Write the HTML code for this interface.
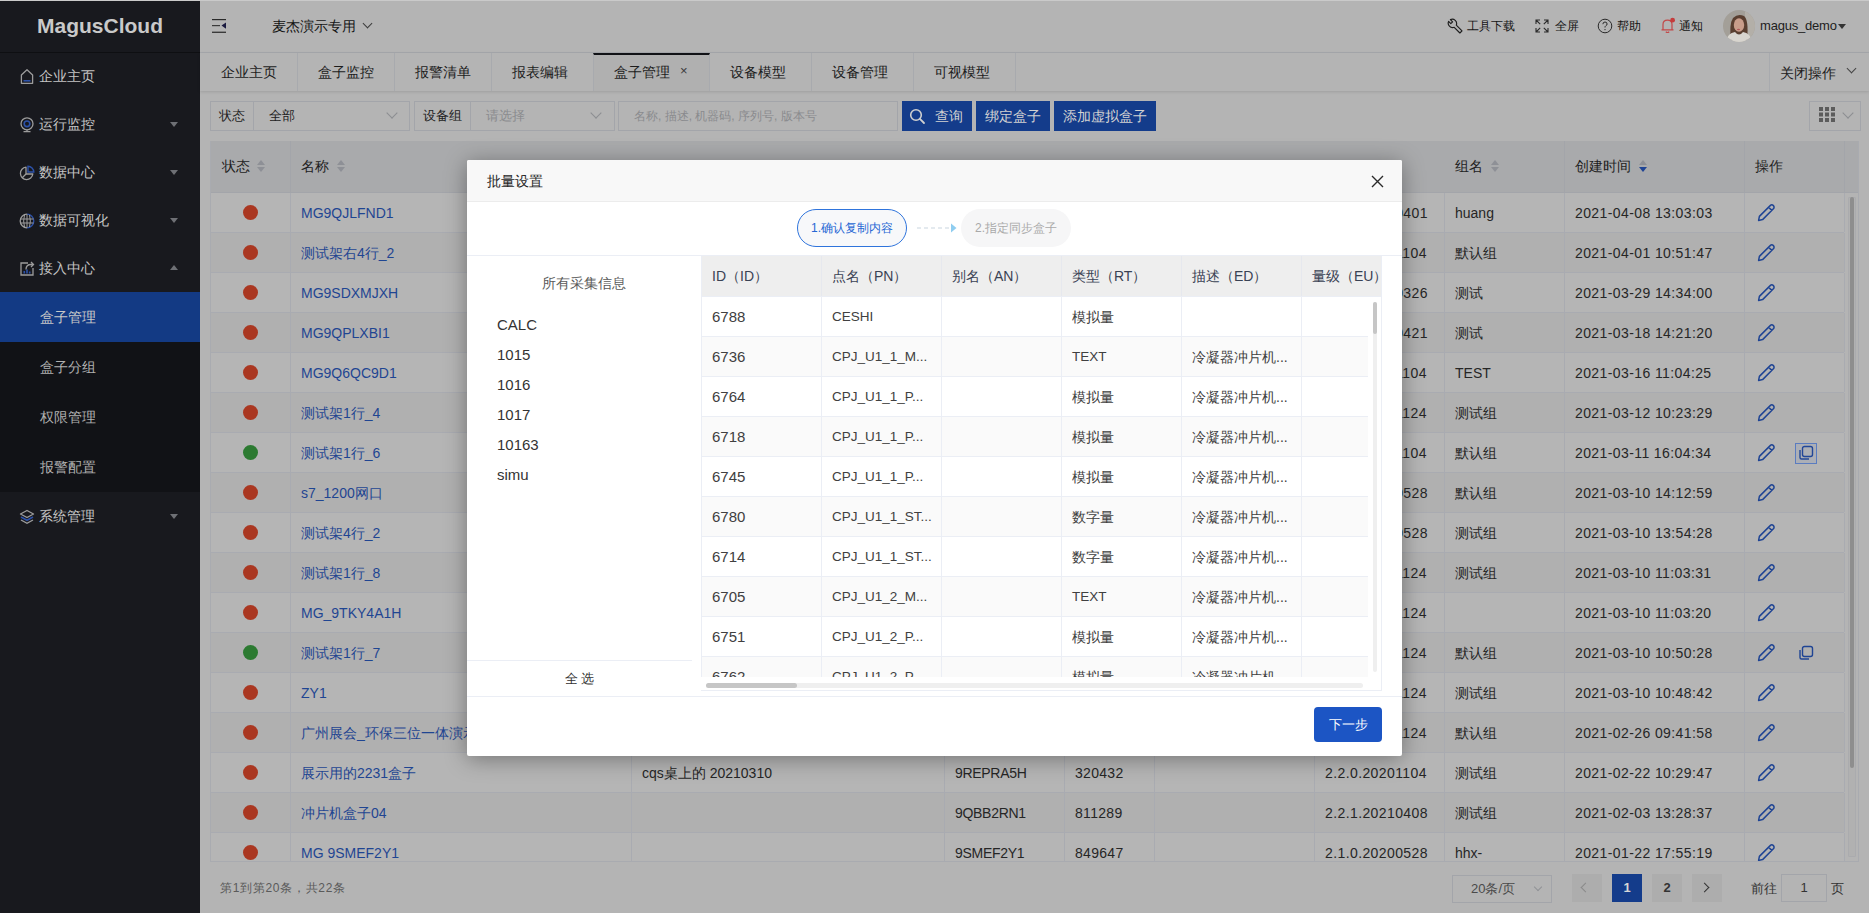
<!DOCTYPE html><html><head><meta charset="utf-8"><style>
*{box-sizing:border-box;margin:0;padding:0}
html,body{width:1869px;height:913px;overflow:hidden;background:#b4b4b4;font-family:"Liberation Sans",sans-serif;font-size:14px;color:#1e1e1e}
.a{position:absolute;white-space:nowrap}
#side{position:absolute;left:0;top:0;width:200px;height:913px;background:#18191e}
#logo{position:absolute;left:0;top:0;width:200px;height:53px;border-bottom:1px solid #0e0f12;color:#c9c9c9;font-weight:bold;font-size:21px;text-align:center;line-height:52px}
.mi{position:absolute;left:0;width:200px;height:48px;line-height:48px;color:#c4c4c4;font-size:14px}
.mi .t{position:absolute;left:39px;top:0}
.mi svg{position:absolute;left:19px;top:17px}
.car{position:absolute;left:170px;top:22px;width:0;height:0;border-left:4px solid transparent;border-right:4px solid transparent;border-top:5px solid #6e7075}
.car.up{border-top:0;border-bottom:5px solid #6e7075;top:21px}
#sub{position:absolute;left:0;top:292px;width:200px;height:200px;background:#111216}
.si{position:absolute;left:0;width:200px;height:50px;line-height:50px;color:#b0b0b0}
.si .t{position:absolute;left:40px}
.si.on{background:#133a84;color:#c8c8c8}
#hdr{position:absolute;left:200px;top:0;width:1669px;height:53px;background:#b4b4b4;border-bottom:1px solid #a6a8ac}
#tabs{position:absolute;left:200px;top:53px;width:1669px;height:38px;background:#b4b4b4;box-shadow:0 1px 3px rgba(0,0,0,.12)}
.tab{position:absolute;top:0;height:38px;line-height:38px;border-right:1px solid #a8aaae;text-align:center;color:#1c1c1c}
.lbl{position:absolute;top:101px;height:30px;line-height:28px;border:1px solid #a3a5aa;background:#b4b4b4;color:#222;font-size:13px;text-align:center}
.sel{position:absolute;top:101px;height:30px;line-height:28px;border:1px solid #a3a5aa;border-left:0;background:#b4b4b4;font-size:13px;color:#222;padding-left:15px}
.chev{position:absolute;width:8px;height:8px;border-right:1px solid #8c8e92;border-bottom:1px solid #8c8e92;transform:rotate(45deg)}
.btn{position:absolute;top:101px;height:30px;line-height:30px;background:#143c8b;color:#d2d2d2;text-align:center;font-size:14px}
#tbl{position:absolute;left:210px;top:141px;width:1649px;height:721px;border:1px solid #a9abb0;border-top:0;border-right:1px solid #a9abb0;overflow:hidden;background:#b4b4b4}
#thead{position:absolute;left:0;top:0;width:1649px;height:52px;background:#a9aaac;border-bottom:1px solid #a3a5aa}
.th{position:absolute;top:0;height:51px;line-height:51px;color:#1e1e1e;border-right:1px solid #a3a5aa;padding-left:10px}
.sort{position:absolute;top:19px;width:10px;height:13px}
.sort:before{content:"";position:absolute;left:1px;top:0;border-left:4px solid transparent;border-right:4px solid transparent;border-bottom:5px solid #8e9096}
.sort:after{content:"";position:absolute;left:1px;top:7px;border-left:4px solid transparent;border-right:4px solid transparent;border-top:5px solid #8e9096}
.sort.dn:after{border-top-color:#1f4494}
.row{position:absolute;left:0;width:1633px;height:40px;border-bottom:1px solid #a9abb1}
.c{position:absolute;top:0;height:39px;line-height:40px;border-right:1px solid #a9abb1;padding-left:10px;white-space:nowrap;overflow:hidden;color:#262626}
.dot{position:absolute;left:31px;top:12px;width:15px;height:15px;border-radius:50%;background:#aa3721}
.dot.g{background:#2c7a31}
.lk{color:#1f4592}
#modal{position:absolute;left:467px;top:160px;width:935px;height:596px;background:#fff;box-shadow:0 3px 22px rgba(0,0,0,.36);border-radius:2px;overflow:hidden}
</style></head><body>
<div id="side"><div id="logo">MagusCloud</div>
<div class="mi" style="top:52px"><span class="t">企业主页</span></div>
<svg class="a" style="left:19px;top:68px" width="16" height="17" viewBox="0 0 16 17"><path d="M2.4 15.3 V7 L8 1.8 L13.6 7 V15.3 Z" fill="none" stroke="#9c9c9c" stroke-width="1.3" stroke-linejoin="round"/><rect x="4.5" y="12" width="7" height="1.6" fill="#2c51a8"/></svg>
<div class="mi" style="top:100px"><span class="t">运行监控</span><span class="car"></span></div>
<svg class="a" style="left:19px;top:116px" width="16" height="17" viewBox="0 0 16 17"><circle cx="8" cy="7.8" r="6" fill="none" stroke="#9c9c9c" stroke-width="1.3"/><circle cx="8" cy="7.8" r="2.8" fill="none" stroke="#2c51a8" stroke-width="1.6"/><path d="M8 13.8 V15.5 M4.5 15.6 H11.5" stroke="#9c9c9c" stroke-width="1.2"/></svg>
<div class="mi" style="top:148px"><span class="t">数据中心</span><span class="car"></span></div>
<svg class="a" style="left:19px;top:165px" width="16" height="16" viewBox="0 0 16 16"><path d="M7 2.2 A6.2 6.2 0 1 0 13.8 9 H7 Z" fill="none" stroke="#9c9c9c" stroke-width="1.3" stroke-linejoin="round"/><path d="M9 1.2 A6 6 0 0 1 14.8 7 H9 Z" fill="none" stroke="#2c51a8" stroke-width="1.4"/><path d="M7 9 L3 13" stroke="#9c9c9c" stroke-width="1.2"/></svg>
<div class="mi" style="top:196px"><span class="t">数据可视化</span><span class="car"></span></div>
<svg class="a" style="left:19px;top:213px" width="16" height="16" viewBox="0 0 16 16"><path d="M8 1.2 A6.8 6.8 0 0 0 8 14.8" fill="none" stroke="#9c9c9c" stroke-width="1.3"/><path d="M8 1.2 A6.8 6.8 0 0 1 8 14.8" fill="none" stroke="#2c51a8" stroke-width="1.3"/><path d="M1.5 6 H14.5 M1.5 10 H14.5 M8 1.2 V14.8 M5.5 2 Q3.8 8 5.5 14 M10.5 2 Q12.2 8 10.5 14" fill="none" stroke="#9c9c9c" stroke-width="1"/></svg>
<div class="mi" style="top:244px"><span class="t">接入中心</span><span class="car up"></span></div>
<svg class="a" style="left:20px;top:261px" width="15" height="15" viewBox="0 0 15 15"><path d="M8 2 H1 V14 H13 V7" fill="none" stroke="#9c9c9c" stroke-width="1.3"/><path d="M6 8.5 Q6 3.5 11 3.5 H13 M11 1 L13.5 3.5 L11 6" fill="none" stroke="#9c9c9c" stroke-width="1.3"/><rect x="3.5" y="10" width="1.6" height="2.5" fill="#2c51a8"/><rect x="6.2" y="8.5" width="1.6" height="4" fill="#2c51a8"/><rect x="8.9" y="10.5" width="1.6" height="2" fill="#2c51a8"/></svg>
<div id="sub">
<div class="si on" style="top:0px"><span class="t">盒子管理</span></div>
<div class="si" style="top:50px"><span class="t">盒子分组</span></div>
<div class="si" style="top:100px"><span class="t">权限管理</span></div>
<div class="si" style="top:150px"><span class="t">报警配置</span></div>
</div>
<div class="mi" style="top:492px"><span class="t">系统管理</span><span class="car"></span></div>
<svg class="a" style="left:19px;top:508px" width="16" height="17" viewBox="0 0 16 17"><path d="M8 2.5 L14.5 6 L8 9.5 L1.5 6 Z" fill="none" stroke="#9c9c9c" stroke-width="1.4" stroke-linejoin="round"/><path d="M2 9 L8 12.3 L14 9" fill="none" stroke="#2c51a8" stroke-width="1.6"/><path d="M2 12 L8 15.3 L14 12" fill="none" stroke="#9c9c9c" stroke-width="1.4"/></svg>
</div>
<div id="hdr"></div>
<div class="a" style="left:0;top:0;width:1869px;height:1px;background:#cacaca"></div>
<svg class="a" style="left:212px;top:19px" width="15" height="14" viewBox="0 0 15 14"><rect x="0" y="0" width="14" height="1.2" fill="#2a2a2a"/><rect x="0" y="6" width="8" height="1.2" fill="#3a3a3a"/><path d="M14 3.5 L9.5 6.6 L14 9.7 Z" fill="#1a1a40"/><rect x="0" y="12.6" width="14" height="1.4" fill="#3a3a3a"/></svg>
<div class="a" style="left:272px;top:17px;font-size:14px;line-height:18px;color:#141414">麦杰演示专用</div>
<div class="chev" style="left:364px;top:20px;width:7px;height:7px;border-color:#3c3c3c"></div>
<svg class="a" style="left:1447px;top:18px" width="16" height="16" viewBox="0 0 16 16"><path d="M3.4 1.6 L5.6 3.8 L3.8 5.6 L1.6 3.4 A4.4 4.4 0 0 0 7.2 9.3 L12.9 15 L15 12.9 L9.3 7.2 A4.4 4.4 0 0 0 3.4 1.6 Z" fill="none" stroke="#1e1e1e" stroke-width="1.15" stroke-linejoin="round"/></svg>
<div class="a" style="left:1467px;top:18px;font-size:12px;line-height:16px;color:#141414">工具下载</div>
<svg class="a" style="left:1535px;top:19px" width="14" height="14" viewBox="0 0 14 14"><path d="M1 5 V1 H5 M1 1 L5.2 5.2 M9 1 H13 V5 M13 1 L8.8 5.2 M1 9 V13 H5 M1 13 L5.2 8.8 M13 9 V13 H9 M13 13 L8.8 8.8" fill="none" stroke="#2a2a2a" stroke-width="1.1"/></svg>
<div class="a" style="left:1555px;top:18px;font-size:12px;line-height:16px;color:#141414">全屏</div>
<svg class="a" style="left:1597px;top:18px" width="16" height="16" viewBox="0 0 16 16"><circle cx="8" cy="8" r="6.8" fill="none" stroke="#2a2a2a" stroke-width="1"/><path d="M5.9 6.2 Q5.9 4 8 4 Q10.1 4 10.1 6 Q10.1 7.2 8.8 7.8 Q8 8.2 8 9.5" fill="none" stroke="#2a2a2a" stroke-width="1"/><circle cx="8" cy="11.6" r=".7" fill="#2a2a2a"/></svg>
<div class="a" style="left:1617px;top:18px;font-size:12px;line-height:16px;color:#141414">帮助</div>
<svg class="a" style="left:1660px;top:17px" width="16" height="17" viewBox="0 0 16 17"><path d="M3 12.5 V7.5 Q3 3.2 7.5 3.2 Q12 3.2 12 7.5 V12.5 M1.5 12.8 H13.5 M5.8 14.8 Q7.5 16.2 9.2 14.8" fill="none" stroke="#c24848" stroke-width="1.2"/><circle cx="12.6" cy="3.2" r="2.4" fill="#c43c3c"/></svg>
<div class="a" style="left:1679px;top:18px;font-size:12px;line-height:16px;color:#141414">通知</div>
<svg class="a" style="left:1723px;top:10px" width="32" height="32" viewBox="0 0 32 32"><defs><clipPath id="av"><circle cx="16" cy="16" r="16"/></clipPath></defs><g clip-path="url(#av)"><rect width="32" height="32" fill="#a39f98"/><rect x="22" y="0" width="10" height="32" fill="#b3afa8"/><path d="M8 30 Q6 14 10 8 Q15 3 21 6 Q26 10 24 30 Z" fill="#5a3f30"/><ellipse cx="16" cy="15" rx="5.2" ry="6.8" fill="#c99d8a"/><ellipse cx="15.5" cy="19.5" rx="1.6" ry=".8" fill="#b0575a"/><path d="M2 34 Q4 23 12 22 Q16 27 20 22 Q28 23 30 34 Z" fill="#d8d5cf"/></g></svg>
<div class="a" style="left:1760px;top:17px;font-size:13px;line-height:18px;color:#1e1e1e;letter-spacing:-.2px">magus_demo</div>
<div class="a" style="left:1838px;top:24px;border-left:4px solid transparent;border-right:4px solid transparent;border-top:5px solid #333"></div>
<div id="tabs"></div>
<div class="tab" style="left:200px;width:98px;top:53px"></div>
<div class="a" style="left:221px;top:63px;font-size:14px;line-height:18px;color:#1c1c1c">企业主页</div>
<div class="tab" style="left:297px;width:98px;top:53px"></div>
<div class="a" style="left:318px;top:63px;font-size:14px;line-height:18px;color:#1c1c1c">盒子监控</div>
<div class="tab" style="left:394px;width:98px;top:53px"></div>
<div class="a" style="left:415px;top:63px;font-size:14px;line-height:18px;color:#1c1c1c">报警清单</div>
<div class="tab" style="left:491px;width:103px;top:53px"></div>
<div class="a" style="left:512px;top:63px;font-size:14px;line-height:18px;color:#1c1c1c">报表编辑</div>
<div class="tab" style="left:593px;width:117px;top:53px;background:#b0b0b0;border-left:1px solid #a8aaae;border-top:2px solid #111216"></div>
<div class="a" style="left:680px;top:63px;font-size:13px;line-height:16px;color:#3a3a3a">×</div>
<div class="a" style="left:614px;top:63px;font-size:14px;line-height:18px;color:#1c1c1c">盒子管理</div>
<div class="tab" style="left:709px;width:103px;top:53px"></div>
<div class="a" style="left:730px;top:63px;font-size:14px;line-height:18px;color:#1c1c1c">设备模型</div>
<div class="tab" style="left:811px;width:103px;top:53px"></div>
<div class="a" style="left:832px;top:63px;font-size:14px;line-height:18px;color:#1c1c1c">设备管理</div>
<div class="tab" style="left:913px;width:103px;top:53px"></div>
<div class="a" style="left:934px;top:63px;font-size:14px;line-height:18px;color:#1c1c1c">可视模型</div>
<div class="a" style="left:1769px;top:53px;width:100px;height:38px;border-left:1px solid #a8aaae"></div>
<div class="a" style="left:1780px;top:64px;font-size:14px;line-height:18px;color:#1c1c1c">关闭操作</div>
<div class="chev" style="left:1848px;top:65px;width:7px;height:7px;border-color:#444"></div>
<div class="lbl" style="left:210px;width:44px">状态</div>
<div class="sel" style="left:254px;width:156px">全部</div>
<div class="lbl" style="left:414px;width:57px">设备组</div>
<div class="sel" style="left:471px;width:144px;color:#8a8b8e">请选择</div>
<div class="sel" style="left:618px;width:280px;border-left:1px solid #a3a5aa;color:#8a8b8e;font-size:12px">名称, 描述, 机器码, 序列号, 版本号</div>
<div class="chev" style="left:388px;top:109px;border-color:#8c8e92"></div>
<div class="chev" style="left:592px;top:109px;border-color:#8c8e92"></div>
<div class="btn" style="left:902px;width:70px;text-align:left;padding-left:33px">查询</div>
<svg class="a" style="left:909px;top:108px" width="17" height="17" viewBox="0 0 17 17"><circle cx="7" cy="7" r="5.3" fill="none" stroke="#d0d0d0" stroke-width="1.6"/><path d="M10.9 10.9 L15 15" stroke="#d0d0d0" stroke-width="1.8" stroke-linecap="round"/></svg>
<div class="a" style="left:1809px;top:101px;width:52px;height:30px;border:1px solid #a3a5aa"></div>
<svg class="a" style="left:1819px;top:107px" width="16" height="15" viewBox="0 0 16 15"><g fill="#5c5c5c"><rect x="0" y="0" width="4" height="4"/><rect x="6" y="0" width="4" height="4"/><rect x="12" y="0" width="4" height="4"/><rect x="0" y="5.5" width="4" height="4"/><rect x="6" y="5.5" width="4" height="4"/><rect x="12" y="5.5" width="4" height="4"/><rect x="0" y="11" width="4" height="4"/><rect x="6" y="11" width="4" height="4"/><rect x="12" y="11" width="4" height="4"/></g></svg>
<div class="chev" style="left:1844px;top:109px;border-color:#8c8e92"></div>
<div class="btn" style="left:976px;width:74px">绑定盒子</div>
<div class="btn" style="left:1054px;width:102px">添加虚拟盒子</div>
<div id="tbl"><div id="thead">
<div class="th" style="left:1px;width:79px;padding-left:10px;border-right-color:#a3a5aa">状态</div>
<div class="th" style="left:80px;width:341px;padding-left:10px;border-right-color:transparent">名称</div>
<div class="th" style="left:421px;width:313px;padding-left:10px;border-right-color:transparent"></div>
<div class="th" style="left:734px;width:120px;padding-left:10px;border-right-color:transparent"></div>
<div class="th" style="left:854px;width:90px;padding-left:10px;border-right-color:transparent"></div>
<div class="th" style="left:944px;width:160px;padding-left:10px;border-right-color:transparent"></div>
<div class="th" style="left:1104px;width:130px;padding-left:10px;border-right-color:transparent"></div>
<div class="th" style="left:1234px;width:120px;padding-left:10px;border-right-color:#a3a5aa">组名</div>
<div class="th" style="left:1354px;width:180px;padding-left:10px;border-right-color:#a3a5aa">创建时间</div>
<div class="th" style="left:1534px;width:100px;padding-left:10px;border-right-color:#a3a5aa">操作</div>
<div class="sort" style="left:45px;top:19px"></div>
<div class="sort" style="left:125px;top:19px"></div>
<div class="sort" style="left:1279px;top:19px"></div>
<div class="sort dn" style="left:1427px;top:19px"></div>
</div>
<div class="row" style="top:52px;background:#b5b5b5">
<div class="c" style="left:1px;width:79px;"><span class="dot"></span></div>
<div class="c" style="left:80px;width:341px;"><span class="lk">MG9QJLFND1</span></div>
<div class="c" style="left:421px;width:313px;"></div>
<div class="c" style="left:734px;width:120px;letter-spacing:-.3px;"></div>
<div class="c" style="left:854px;width:90px;letter-spacing:.3px;"></div>
<div class="c" style="left:944px;width:160px;"></div>
<div class="c" style="left:1104px;width:130px;letter-spacing:.4px;">2.2.1.20210401</div>
<div class="c" style="left:1234px;width:120px;">huang</div>
<div class="c" style="left:1354px;width:180px;letter-spacing:.4px;">2021-04-08 13:03:03</div>
<div class="c" style="left:1534px;width:100px;"><svg class="a" style="left:12px;top:10px" width="19" height="19" viewBox="0 0 19 19"><path d="M1.6 17.4 L2.4 13.4 L13.2 2.6 A2.1 2.1 0 0 1 16.4 5.8 L5.6 16.6 Z M11.6 4.2 L14.8 7.4" fill="none" stroke="#1f4494" stroke-width="1.5" stroke-linejoin="round"/></svg></div>
</div>
<div class="row" style="top:92px;background:#b0b0b0">
<div class="c" style="left:1px;width:79px;"><span class="dot"></span></div>
<div class="c" style="left:80px;width:341px;"><span class="lk">测试架右4行_2</span></div>
<div class="c" style="left:421px;width:313px;"></div>
<div class="c" style="left:734px;width:120px;letter-spacing:-.3px;"></div>
<div class="c" style="left:854px;width:90px;letter-spacing:.3px;"></div>
<div class="c" style="left:944px;width:160px;"></div>
<div class="c" style="left:1104px;width:130px;letter-spacing:.4px;">2.2.0.20201104</div>
<div class="c" style="left:1234px;width:120px;">默认组</div>
<div class="c" style="left:1354px;width:180px;letter-spacing:.4px;">2021-04-01 10:51:47</div>
<div class="c" style="left:1534px;width:100px;"><svg class="a" style="left:12px;top:10px" width="19" height="19" viewBox="0 0 19 19"><path d="M1.6 17.4 L2.4 13.4 L13.2 2.6 A2.1 2.1 0 0 1 16.4 5.8 L5.6 16.6 Z M11.6 4.2 L14.8 7.4" fill="none" stroke="#1f4494" stroke-width="1.5" stroke-linejoin="round"/></svg></div>
</div>
<div class="row" style="top:132px;background:#b5b5b5">
<div class="c" style="left:1px;width:79px;"><span class="dot"></span></div>
<div class="c" style="left:80px;width:341px;"><span class="lk">MG9SDXMJXH</span></div>
<div class="c" style="left:421px;width:313px;"></div>
<div class="c" style="left:734px;width:120px;letter-spacing:-.3px;"></div>
<div class="c" style="left:854px;width:90px;letter-spacing:.3px;"></div>
<div class="c" style="left:944px;width:160px;"></div>
<div class="c" style="left:1104px;width:130px;letter-spacing:.4px;">2.2.1.20210326</div>
<div class="c" style="left:1234px;width:120px;">测试</div>
<div class="c" style="left:1354px;width:180px;letter-spacing:.4px;">2021-03-29 14:34:00</div>
<div class="c" style="left:1534px;width:100px;"><svg class="a" style="left:12px;top:10px" width="19" height="19" viewBox="0 0 19 19"><path d="M1.6 17.4 L2.4 13.4 L13.2 2.6 A2.1 2.1 0 0 1 16.4 5.8 L5.6 16.6 Z M11.6 4.2 L14.8 7.4" fill="none" stroke="#1f4494" stroke-width="1.5" stroke-linejoin="round"/></svg></div>
</div>
<div class="row" style="top:172px;background:#b0b0b0">
<div class="c" style="left:1px;width:79px;"><span class="dot"></span></div>
<div class="c" style="left:80px;width:341px;"><span class="lk">MG9QPLXBI1</span></div>
<div class="c" style="left:421px;width:313px;"></div>
<div class="c" style="left:734px;width:120px;letter-spacing:-.3px;"></div>
<div class="c" style="left:854px;width:90px;letter-spacing:.3px;"></div>
<div class="c" style="left:944px;width:160px;"></div>
<div class="c" style="left:1104px;width:130px;letter-spacing:.4px;">2.2.1.20210421</div>
<div class="c" style="left:1234px;width:120px;">测试</div>
<div class="c" style="left:1354px;width:180px;letter-spacing:.4px;">2021-03-18 14:21:20</div>
<div class="c" style="left:1534px;width:100px;"><svg class="a" style="left:12px;top:10px" width="19" height="19" viewBox="0 0 19 19"><path d="M1.6 17.4 L2.4 13.4 L13.2 2.6 A2.1 2.1 0 0 1 16.4 5.8 L5.6 16.6 Z M11.6 4.2 L14.8 7.4" fill="none" stroke="#1f4494" stroke-width="1.5" stroke-linejoin="round"/></svg></div>
</div>
<div class="row" style="top:212px;background:#b5b5b5">
<div class="c" style="left:1px;width:79px;"><span class="dot"></span></div>
<div class="c" style="left:80px;width:341px;"><span class="lk">MG9Q6QC9D1</span></div>
<div class="c" style="left:421px;width:313px;"></div>
<div class="c" style="left:734px;width:120px;letter-spacing:-.3px;"></div>
<div class="c" style="left:854px;width:90px;letter-spacing:.3px;"></div>
<div class="c" style="left:944px;width:160px;"></div>
<div class="c" style="left:1104px;width:130px;letter-spacing:.4px;">2.2.0.20201104</div>
<div class="c" style="left:1234px;width:120px;">TEST</div>
<div class="c" style="left:1354px;width:180px;letter-spacing:.4px;">2021-03-16 11:04:25</div>
<div class="c" style="left:1534px;width:100px;"><svg class="a" style="left:12px;top:10px" width="19" height="19" viewBox="0 0 19 19"><path d="M1.6 17.4 L2.4 13.4 L13.2 2.6 A2.1 2.1 0 0 1 16.4 5.8 L5.6 16.6 Z M11.6 4.2 L14.8 7.4" fill="none" stroke="#1f4494" stroke-width="1.5" stroke-linejoin="round"/></svg></div>
</div>
<div class="row" style="top:252px;background:#b0b0b0">
<div class="c" style="left:1px;width:79px;"><span class="dot"></span></div>
<div class="c" style="left:80px;width:341px;"><span class="lk">测试架1行_4</span></div>
<div class="c" style="left:421px;width:313px;"></div>
<div class="c" style="left:734px;width:120px;letter-spacing:-.3px;"></div>
<div class="c" style="left:854px;width:90px;letter-spacing:.3px;"></div>
<div class="c" style="left:944px;width:160px;"></div>
<div class="c" style="left:1104px;width:130px;letter-spacing:.4px;">2.2.0.20201124</div>
<div class="c" style="left:1234px;width:120px;">测试组</div>
<div class="c" style="left:1354px;width:180px;letter-spacing:.4px;">2021-03-12 10:23:29</div>
<div class="c" style="left:1534px;width:100px;"><svg class="a" style="left:12px;top:10px" width="19" height="19" viewBox="0 0 19 19"><path d="M1.6 17.4 L2.4 13.4 L13.2 2.6 A2.1 2.1 0 0 1 16.4 5.8 L5.6 16.6 Z M11.6 4.2 L14.8 7.4" fill="none" stroke="#1f4494" stroke-width="1.5" stroke-linejoin="round"/></svg></div>
</div>
<div class="row" style="top:292px;background:#b5b5b5">
<div class="c" style="left:1px;width:79px;"><span class="dot g"></span></div>
<div class="c" style="left:80px;width:341px;"><span class="lk">测试架1行_6</span></div>
<div class="c" style="left:421px;width:313px;"></div>
<div class="c" style="left:734px;width:120px;letter-spacing:-.3px;"></div>
<div class="c" style="left:854px;width:90px;letter-spacing:.3px;"></div>
<div class="c" style="left:944px;width:160px;"></div>
<div class="c" style="left:1104px;width:130px;letter-spacing:.4px;">2.2.0.20201104</div>
<div class="c" style="left:1234px;width:120px;">默认组</div>
<div class="c" style="left:1354px;width:180px;letter-spacing:.4px;">2021-03-11 16:04:34</div>
<div class="c" style="left:1534px;width:100px;"><svg class="a" style="left:12px;top:10px" width="19" height="19" viewBox="0 0 19 19"><path d="M1.6 17.4 L2.4 13.4 L13.2 2.6 A2.1 2.1 0 0 1 16.4 5.8 L5.6 16.6 Z M11.6 4.2 L14.8 7.4" fill="none" stroke="#1f4494" stroke-width="1.5" stroke-linejoin="round"/></svg><svg class="a" style="left:53px;top:12px" width="16" height="16" viewBox="0 0 16 16"><rect x="4.5" y="1.5" width="10" height="10" rx="2" fill="none" stroke="#1f4494" stroke-width="1.4"/><path d="M2 5 V12.5 Q2 14 3.5 14 H11" fill="none" stroke="#1f4494" stroke-width="1.4"/></svg><div class="a" style="left:50px;top:10px;width:22px;height:21px;border:1px solid #5a7cc0;background:rgba(80,120,200,.08)"></div></div>
</div>
<div class="row" style="top:332px;background:#b0b0b0">
<div class="c" style="left:1px;width:79px;"><span class="dot"></span></div>
<div class="c" style="left:80px;width:341px;"><span class="lk">s7_1200网口</span></div>
<div class="c" style="left:421px;width:313px;"></div>
<div class="c" style="left:734px;width:120px;letter-spacing:-.3px;"></div>
<div class="c" style="left:854px;width:90px;letter-spacing:.3px;"></div>
<div class="c" style="left:944px;width:160px;"></div>
<div class="c" style="left:1104px;width:130px;letter-spacing:.4px;">2.1.0.20200528</div>
<div class="c" style="left:1234px;width:120px;">默认组</div>
<div class="c" style="left:1354px;width:180px;letter-spacing:.4px;">2021-03-10 14:12:59</div>
<div class="c" style="left:1534px;width:100px;"><svg class="a" style="left:12px;top:10px" width="19" height="19" viewBox="0 0 19 19"><path d="M1.6 17.4 L2.4 13.4 L13.2 2.6 A2.1 2.1 0 0 1 16.4 5.8 L5.6 16.6 Z M11.6 4.2 L14.8 7.4" fill="none" stroke="#1f4494" stroke-width="1.5" stroke-linejoin="round"/></svg></div>
</div>
<div class="row" style="top:372px;background:#b5b5b5">
<div class="c" style="left:1px;width:79px;"><span class="dot"></span></div>
<div class="c" style="left:80px;width:341px;"><span class="lk">测试架4行_2</span></div>
<div class="c" style="left:421px;width:313px;"></div>
<div class="c" style="left:734px;width:120px;letter-spacing:-.3px;"></div>
<div class="c" style="left:854px;width:90px;letter-spacing:.3px;"></div>
<div class="c" style="left:944px;width:160px;"></div>
<div class="c" style="left:1104px;width:130px;letter-spacing:.4px;">2.1.0.20200528</div>
<div class="c" style="left:1234px;width:120px;">测试组</div>
<div class="c" style="left:1354px;width:180px;letter-spacing:.4px;">2021-03-10 13:54:28</div>
<div class="c" style="left:1534px;width:100px;"><svg class="a" style="left:12px;top:10px" width="19" height="19" viewBox="0 0 19 19"><path d="M1.6 17.4 L2.4 13.4 L13.2 2.6 A2.1 2.1 0 0 1 16.4 5.8 L5.6 16.6 Z M11.6 4.2 L14.8 7.4" fill="none" stroke="#1f4494" stroke-width="1.5" stroke-linejoin="round"/></svg></div>
</div>
<div class="row" style="top:412px;background:#b0b0b0">
<div class="c" style="left:1px;width:79px;"><span class="dot"></span></div>
<div class="c" style="left:80px;width:341px;"><span class="lk">测试架1行_8</span></div>
<div class="c" style="left:421px;width:313px;"></div>
<div class="c" style="left:734px;width:120px;letter-spacing:-.3px;"></div>
<div class="c" style="left:854px;width:90px;letter-spacing:.3px;"></div>
<div class="c" style="left:944px;width:160px;"></div>
<div class="c" style="left:1104px;width:130px;letter-spacing:.4px;">2.2.0.20201124</div>
<div class="c" style="left:1234px;width:120px;">测试组</div>
<div class="c" style="left:1354px;width:180px;letter-spacing:.4px;">2021-03-10 11:03:31</div>
<div class="c" style="left:1534px;width:100px;"><svg class="a" style="left:12px;top:10px" width="19" height="19" viewBox="0 0 19 19"><path d="M1.6 17.4 L2.4 13.4 L13.2 2.6 A2.1 2.1 0 0 1 16.4 5.8 L5.6 16.6 Z M11.6 4.2 L14.8 7.4" fill="none" stroke="#1f4494" stroke-width="1.5" stroke-linejoin="round"/></svg></div>
</div>
<div class="row" style="top:452px;background:#b5b5b5">
<div class="c" style="left:1px;width:79px;"><span class="dot"></span></div>
<div class="c" style="left:80px;width:341px;"><span class="lk">MG_9TKY4A1H</span></div>
<div class="c" style="left:421px;width:313px;"></div>
<div class="c" style="left:734px;width:120px;letter-spacing:-.3px;"></div>
<div class="c" style="left:854px;width:90px;letter-spacing:.3px;"></div>
<div class="c" style="left:944px;width:160px;"></div>
<div class="c" style="left:1104px;width:130px;letter-spacing:.4px;">2.2.0.20201124</div>
<div class="c" style="left:1234px;width:120px;"></div>
<div class="c" style="left:1354px;width:180px;letter-spacing:.4px;">2021-03-10 11:03:20</div>
<div class="c" style="left:1534px;width:100px;"><svg class="a" style="left:12px;top:10px" width="19" height="19" viewBox="0 0 19 19"><path d="M1.6 17.4 L2.4 13.4 L13.2 2.6 A2.1 2.1 0 0 1 16.4 5.8 L5.6 16.6 Z M11.6 4.2 L14.8 7.4" fill="none" stroke="#1f4494" stroke-width="1.5" stroke-linejoin="round"/></svg></div>
</div>
<div class="row" style="top:492px;background:#b0b0b0">
<div class="c" style="left:1px;width:79px;"><span class="dot g"></span></div>
<div class="c" style="left:80px;width:341px;"><span class="lk">测试架1行_7</span></div>
<div class="c" style="left:421px;width:313px;"></div>
<div class="c" style="left:734px;width:120px;letter-spacing:-.3px;"></div>
<div class="c" style="left:854px;width:90px;letter-spacing:.3px;"></div>
<div class="c" style="left:944px;width:160px;"></div>
<div class="c" style="left:1104px;width:130px;letter-spacing:.4px;">2.2.0.20201124</div>
<div class="c" style="left:1234px;width:120px;">默认组</div>
<div class="c" style="left:1354px;width:180px;letter-spacing:.4px;">2021-03-10 10:50:28</div>
<div class="c" style="left:1534px;width:100px;"><svg class="a" style="left:12px;top:10px" width="19" height="19" viewBox="0 0 19 19"><path d="M1.6 17.4 L2.4 13.4 L13.2 2.6 A2.1 2.1 0 0 1 16.4 5.8 L5.6 16.6 Z M11.6 4.2 L14.8 7.4" fill="none" stroke="#1f4494" stroke-width="1.5" stroke-linejoin="round"/></svg><svg class="a" style="left:53px;top:12px" width="16" height="16" viewBox="0 0 16 16"><rect x="4.5" y="1.5" width="10" height="10" rx="2" fill="none" stroke="#1f4494" stroke-width="1.4"/><path d="M2 5 V12.5 Q2 14 3.5 14 H11" fill="none" stroke="#1f4494" stroke-width="1.4"/></svg></div>
</div>
<div class="row" style="top:532px;background:#b5b5b5">
<div class="c" style="left:1px;width:79px;"><span class="dot"></span></div>
<div class="c" style="left:80px;width:341px;"><span class="lk">ZY1</span></div>
<div class="c" style="left:421px;width:313px;"></div>
<div class="c" style="left:734px;width:120px;letter-spacing:-.3px;"></div>
<div class="c" style="left:854px;width:90px;letter-spacing:.3px;"></div>
<div class="c" style="left:944px;width:160px;"></div>
<div class="c" style="left:1104px;width:130px;letter-spacing:.4px;">2.2.0.20201124</div>
<div class="c" style="left:1234px;width:120px;">测试组</div>
<div class="c" style="left:1354px;width:180px;letter-spacing:.4px;">2021-03-10 10:48:42</div>
<div class="c" style="left:1534px;width:100px;"><svg class="a" style="left:12px;top:10px" width="19" height="19" viewBox="0 0 19 19"><path d="M1.6 17.4 L2.4 13.4 L13.2 2.6 A2.1 2.1 0 0 1 16.4 5.8 L5.6 16.6 Z M11.6 4.2 L14.8 7.4" fill="none" stroke="#1f4494" stroke-width="1.5" stroke-linejoin="round"/></svg></div>
</div>
<div class="row" style="top:572px;background:#b0b0b0">
<div class="c" style="left:1px;width:79px;"><span class="dot"></span></div>
<div class="c" style="left:80px;width:341px;"><span class="lk">广州展会_环保三位一体演示</span></div>
<div class="c" style="left:421px;width:313px;"></div>
<div class="c" style="left:734px;width:120px;letter-spacing:-.3px;"></div>
<div class="c" style="left:854px;width:90px;letter-spacing:.3px;"></div>
<div class="c" style="left:944px;width:160px;"></div>
<div class="c" style="left:1104px;width:130px;letter-spacing:.4px;">2.2.0.20201124</div>
<div class="c" style="left:1234px;width:120px;">默认组</div>
<div class="c" style="left:1354px;width:180px;letter-spacing:.4px;">2021-02-26 09:41:58</div>
<div class="c" style="left:1534px;width:100px;"><svg class="a" style="left:12px;top:10px" width="19" height="19" viewBox="0 0 19 19"><path d="M1.6 17.4 L2.4 13.4 L13.2 2.6 A2.1 2.1 0 0 1 16.4 5.8 L5.6 16.6 Z M11.6 4.2 L14.8 7.4" fill="none" stroke="#1f4494" stroke-width="1.5" stroke-linejoin="round"/></svg></div>
</div>
<div class="row" style="top:612px;background:#b5b5b5">
<div class="c" style="left:1px;width:79px;"><span class="dot"></span></div>
<div class="c" style="left:80px;width:341px;"><span class="lk">展示用的2231盒子</span></div>
<div class="c" style="left:421px;width:313px;">cqs桌上的 20210310</div>
<div class="c" style="left:734px;width:120px;letter-spacing:-.3px;">9REPRA5H</div>
<div class="c" style="left:854px;width:90px;letter-spacing:.3px;">320432</div>
<div class="c" style="left:944px;width:160px;"></div>
<div class="c" style="left:1104px;width:130px;letter-spacing:.4px;">2.2.0.20201104</div>
<div class="c" style="left:1234px;width:120px;">测试组</div>
<div class="c" style="left:1354px;width:180px;letter-spacing:.4px;">2021-02-22 10:29:47</div>
<div class="c" style="left:1534px;width:100px;"><svg class="a" style="left:12px;top:10px" width="19" height="19" viewBox="0 0 19 19"><path d="M1.6 17.4 L2.4 13.4 L13.2 2.6 A2.1 2.1 0 0 1 16.4 5.8 L5.6 16.6 Z M11.6 4.2 L14.8 7.4" fill="none" stroke="#1f4494" stroke-width="1.5" stroke-linejoin="round"/></svg></div>
</div>
<div class="row" style="top:652px;background:#b0b0b0">
<div class="c" style="left:1px;width:79px;"><span class="dot"></span></div>
<div class="c" style="left:80px;width:341px;"><span class="lk">冲片机盒子04</span></div>
<div class="c" style="left:421px;width:313px;"></div>
<div class="c" style="left:734px;width:120px;letter-spacing:-.3px;">9QBB2RN1</div>
<div class="c" style="left:854px;width:90px;letter-spacing:.3px;">811289</div>
<div class="c" style="left:944px;width:160px;"></div>
<div class="c" style="left:1104px;width:130px;letter-spacing:.4px;">2.2.1.20210408</div>
<div class="c" style="left:1234px;width:120px;">测试组</div>
<div class="c" style="left:1354px;width:180px;letter-spacing:.4px;">2021-02-03 13:28:37</div>
<div class="c" style="left:1534px;width:100px;"><svg class="a" style="left:12px;top:10px" width="19" height="19" viewBox="0 0 19 19"><path d="M1.6 17.4 L2.4 13.4 L13.2 2.6 A2.1 2.1 0 0 1 16.4 5.8 L5.6 16.6 Z M11.6 4.2 L14.8 7.4" fill="none" stroke="#1f4494" stroke-width="1.5" stroke-linejoin="round"/></svg></div>
</div>
<div class="row" style="top:692px;background:#b5b5b5">
<div class="c" style="left:1px;width:79px;"><span class="dot"></span></div>
<div class="c" style="left:80px;width:341px;"><span class="lk">MG 9SMEF2Y1</span></div>
<div class="c" style="left:421px;width:313px;"></div>
<div class="c" style="left:734px;width:120px;letter-spacing:-.3px;">9SMEF2Y1</div>
<div class="c" style="left:854px;width:90px;letter-spacing:.3px;">849647</div>
<div class="c" style="left:944px;width:160px;"></div>
<div class="c" style="left:1104px;width:130px;letter-spacing:.4px;">2.1.0.20200528</div>
<div class="c" style="left:1234px;width:120px;">hhx-</div>
<div class="c" style="left:1354px;width:180px;letter-spacing:.4px;">2021-01-22 17:55:19</div>
<div class="c" style="left:1534px;width:100px;"><svg class="a" style="left:12px;top:10px" width="19" height="19" viewBox="0 0 19 19"><path d="M1.6 17.4 L2.4 13.4 L13.2 2.6 A2.1 2.1 0 0 1 16.4 5.8 L5.6 16.6 Z M11.6 4.2 L14.8 7.4" fill="none" stroke="#1f4494" stroke-width="1.5" stroke-linejoin="round"/></svg></div>
</div>
</div>
<div class="a" style="left:220px;top:880px;font-size:12px;line-height:16px;color:#5a5a5a;letter-spacing:.7px">第1到第20条，共22条</div>
<div class="a" style="left:1452px;top:875px;width:100px;height:28px;border:1px solid #a3a5aa"></div>
<div class="a" style="left:1471px;top:880px;font-size:13px;line-height:17px;color:#4a4a4a">20条/页</div>
<div class="chev" style="left:1535px;top:884px;width:6px;height:6px;border-color:#909296"></div>
<div class="a" style="left:1572px;top:874px;width:30px;height:28px;background:#adadad"></div>
<div class="a" style="left:1582px;top:884px;width:7px;height:7px;border-left:1px solid #8a8a8a;border-bottom:1px solid #8a8a8a;transform:rotate(45deg)"></div>
<div class="a" style="left:1612px;top:874px;width:30px;height:28px;background:#143c8b;color:#d6d6d6;font-weight:bold;font-size:13px;text-align:center;line-height:28px">1</div>
<div class="a" style="left:1652px;top:874px;width:30px;height:28px;background:#adadad;color:#333;font-weight:bold;font-size:13px;text-align:center;line-height:28px">2</div>
<div class="a" style="left:1692px;top:874px;width:30px;height:28px;background:#adadad"></div>
<div class="a" style="left:1701px;top:884px;width:7px;height:7px;border-right:1px solid #333;border-top:1px solid #333;transform:rotate(45deg)"></div>
<div class="a" style="left:1751px;top:880px;font-size:13px;line-height:17px;color:#333">前往</div>
<div class="a" style="left:1781px;top:874px;width:46px;height:28px;border:1px solid #a3a5aa;text-align:center;line-height:26px;font-size:13px;color:#333">1</div>
<div class="a" style="left:1831px;top:880px;font-size:13px;line-height:17px;color:#333">页</div>
<div class="a" style="left:1848px;top:197px;width:8px;height:660px;background:#b1b1b1;border:1px solid #aaabae;border-radius:1px"></div>
<div class="a" style="left:1850px;top:197px;width:4px;height:571px;background:#8e8e8e;border-radius:2px"></div>
<div id="modal">
<div class="a" style="left:0;top:0;width:935px;height:42px;background:#f8f8f8;border-bottom:1px solid #ececec"></div>
<div class="a" style="left:20px;top:12px;font-size:14px;line-height:18px;color:#262626">批量设置</div>
<svg class="a" style="left:904px;top:15px" width="13" height="13" viewBox="0 0 13 13"><path d="M1 1 L12 12 M12 1 L1 12" stroke="#2a2a2a" stroke-width="1.4"/></svg>
<div class="a" style="left:330px;top:49px;width:110px;height:38px;border:1px solid #2f74dc;background:#f7f8fa;border-radius:19px;text-align:center;line-height:36px;font-size:12px;color:#2667d4">1.确认复制内容</div>
<svg class="a" style="left:450px;top:62px" width="40" height="12" viewBox="0 0 40 12"><path d="M0 6 H34" stroke="#dce3ea" stroke-width="1.6" stroke-dasharray="4 3"/><path d="M34 1.5 L39.5 6 L34 10.5 Z" fill="#8fcdf0"/></svg>
<div class="a" style="left:494px;top:49px;width:110px;height:38px;background:#f6f6f7;border-radius:19px;text-align:center;line-height:38px;font-size:12px;color:#a9a9a9">2.指定同步盒子</div>
<div class="a" style="left:0;top:95px;width:935px;height:1px;background:#ebeef5"></div>
<div class="a" style="left:75px;top:114px;font-size:14px;line-height:18px;color:#5a5a5a">所有采集信息</div>
<div class="a" style="left:30px;top:156px;font-size:15px;line-height:18px;color:#333">CALC</div>
<div class="a" style="left:30px;top:186px;font-size:15px;line-height:18px;color:#333">1015</div>
<div class="a" style="left:30px;top:216px;font-size:15px;line-height:18px;color:#333">1016</div>
<div class="a" style="left:30px;top:246px;font-size:15px;line-height:18px;color:#333">1017</div>
<div class="a" style="left:30px;top:276px;font-size:15px;line-height:18px;color:#333">10163</div>
<div class="a" style="left:30px;top:306px;font-size:15px;line-height:18px;color:#333">simu</div>
<div class="a" style="left:0;top:500px;width:225px;height:1px;background:#ebeef5"></div>
<div class="a" style="left:98px;top:511px;font-size:13px;line-height:16px;color:#333;letter-spacing:3px">全选</div>
<div class="a" style="left:234px;top:96px;width:681px;height:435px;border-right:1px solid #ebeef5;border-bottom:1px solid #ebeef5;overflow:hidden">
<div class="a" style="left:0;top:0;width:681px;height:41px;background:#eeeeee;border-bottom:1px solid #ebeef5"></div>
<div class="a" style="left:0px;top:0;width:120px;height:40px;border-left:1px solid #ebeef5;"></div>
<div class="a" style="left:11px;top:11px;font-size:14px;line-height:18px;color:#3a4254">ID（ID）</div>
<div class="a" style="left:120px;top:0;width:120px;height:40px;border-left:1px solid #e6e8ee;"></div>
<div class="a" style="left:131px;top:11px;font-size:14px;line-height:18px;color:#3a4254">点名（PN）</div>
<div class="a" style="left:240px;top:0;width:120px;height:40px;border-left:1px solid #e6e8ee;"></div>
<div class="a" style="left:251px;top:11px;font-size:14px;line-height:18px;color:#3a4254">别名（AN）</div>
<div class="a" style="left:360px;top:0;width:120px;height:40px;border-left:1px solid #e6e8ee;"></div>
<div class="a" style="left:371px;top:11px;font-size:14px;line-height:18px;color:#3a4254">类型（RT）</div>
<div class="a" style="left:480px;top:0;width:120px;height:40px;border-left:1px solid #e6e8ee;"></div>
<div class="a" style="left:491px;top:11px;font-size:14px;line-height:18px;color:#3a4254">描述（ED）</div>
<div class="a" style="left:600px;top:0;width:120px;height:40px;border-left:1px solid #e6e8ee;"></div>
<div class="a" style="left:611px;top:11px;font-size:14px;line-height:18px;color:#3a4254">量级（EU）</div>
<div class="a" style="left:0;top:41px;width:667px;height:380px;overflow:hidden">
<div class="a" style="left:0;top:0px;width:667px;height:40px;background:#ffffff;border-bottom:1px solid #ebeef5">
<div class="a" style="left:0px;top:0;width:120px;height:40px;border-left:1px solid #ebeef5"></div>
<div class="a" style="left:120px;top:0;width:120px;height:40px;border-left:1px solid #ebeef5"></div>
<div class="a" style="left:240px;top:0;width:120px;height:40px;border-left:1px solid #ebeef5"></div>
<div class="a" style="left:360px;top:0;width:120px;height:40px;border-left:1px solid #ebeef5"></div>
<div class="a" style="left:480px;top:0;width:120px;height:40px;border-left:1px solid #ebeef5"></div>
<div class="a" style="left:600px;top:0;width:120px;height:40px;border-left:1px solid #ebeef5"></div>
<div class="a" style="left:11px;top:11px;font-size:15px;line-height:18px;color:#404040">6788</div>
<div class="a" style="left:131px;top:11px;font-size:13.5px;line-height:18px;color:#404040">CESHI</div>
<div class="a" style="left:371px;top:11px;font-size:14px;line-height:18px;color:#404040">模拟量</div>
</div>
<div class="a" style="left:0;top:40px;width:667px;height:40px;background:#fafafa;border-bottom:1px solid #ebeef5">
<div class="a" style="left:0px;top:0;width:120px;height:40px;border-left:1px solid #ebeef5"></div>
<div class="a" style="left:120px;top:0;width:120px;height:40px;border-left:1px solid #ebeef5"></div>
<div class="a" style="left:240px;top:0;width:120px;height:40px;border-left:1px solid #ebeef5"></div>
<div class="a" style="left:360px;top:0;width:120px;height:40px;border-left:1px solid #ebeef5"></div>
<div class="a" style="left:480px;top:0;width:120px;height:40px;border-left:1px solid #ebeef5"></div>
<div class="a" style="left:600px;top:0;width:120px;height:40px;border-left:1px solid #ebeef5"></div>
<div class="a" style="left:11px;top:11px;font-size:15px;line-height:18px;color:#404040">6736</div>
<div class="a" style="left:131px;top:11px;font-size:13.5px;line-height:18px;color:#404040">CPJ_U1_1_M...</div>
<div class="a" style="left:371px;top:11px;font-size:13.5px;line-height:18px;color:#404040">TEXT</div>
<div class="a" style="left:491px;top:11px;font-size:14px;line-height:18px;color:#404040">冷凝器冲片机...</div>
</div>
<div class="a" style="left:0;top:80px;width:667px;height:40px;background:#ffffff;border-bottom:1px solid #ebeef5">
<div class="a" style="left:0px;top:0;width:120px;height:40px;border-left:1px solid #ebeef5"></div>
<div class="a" style="left:120px;top:0;width:120px;height:40px;border-left:1px solid #ebeef5"></div>
<div class="a" style="left:240px;top:0;width:120px;height:40px;border-left:1px solid #ebeef5"></div>
<div class="a" style="left:360px;top:0;width:120px;height:40px;border-left:1px solid #ebeef5"></div>
<div class="a" style="left:480px;top:0;width:120px;height:40px;border-left:1px solid #ebeef5"></div>
<div class="a" style="left:600px;top:0;width:120px;height:40px;border-left:1px solid #ebeef5"></div>
<div class="a" style="left:11px;top:11px;font-size:15px;line-height:18px;color:#404040">6764</div>
<div class="a" style="left:131px;top:11px;font-size:13.5px;line-height:18px;color:#404040">CPJ_U1_1_P...</div>
<div class="a" style="left:371px;top:11px;font-size:14px;line-height:18px;color:#404040">模拟量</div>
<div class="a" style="left:491px;top:11px;font-size:14px;line-height:18px;color:#404040">冷凝器冲片机...</div>
</div>
<div class="a" style="left:0;top:120px;width:667px;height:40px;background:#fafafa;border-bottom:1px solid #ebeef5">
<div class="a" style="left:0px;top:0;width:120px;height:40px;border-left:1px solid #ebeef5"></div>
<div class="a" style="left:120px;top:0;width:120px;height:40px;border-left:1px solid #ebeef5"></div>
<div class="a" style="left:240px;top:0;width:120px;height:40px;border-left:1px solid #ebeef5"></div>
<div class="a" style="left:360px;top:0;width:120px;height:40px;border-left:1px solid #ebeef5"></div>
<div class="a" style="left:480px;top:0;width:120px;height:40px;border-left:1px solid #ebeef5"></div>
<div class="a" style="left:600px;top:0;width:120px;height:40px;border-left:1px solid #ebeef5"></div>
<div class="a" style="left:11px;top:11px;font-size:15px;line-height:18px;color:#404040">6718</div>
<div class="a" style="left:131px;top:11px;font-size:13.5px;line-height:18px;color:#404040">CPJ_U1_1_P...</div>
<div class="a" style="left:371px;top:11px;font-size:14px;line-height:18px;color:#404040">模拟量</div>
<div class="a" style="left:491px;top:11px;font-size:14px;line-height:18px;color:#404040">冷凝器冲片机...</div>
</div>
<div class="a" style="left:0;top:160px;width:667px;height:40px;background:#ffffff;border-bottom:1px solid #ebeef5">
<div class="a" style="left:0px;top:0;width:120px;height:40px;border-left:1px solid #ebeef5"></div>
<div class="a" style="left:120px;top:0;width:120px;height:40px;border-left:1px solid #ebeef5"></div>
<div class="a" style="left:240px;top:0;width:120px;height:40px;border-left:1px solid #ebeef5"></div>
<div class="a" style="left:360px;top:0;width:120px;height:40px;border-left:1px solid #ebeef5"></div>
<div class="a" style="left:480px;top:0;width:120px;height:40px;border-left:1px solid #ebeef5"></div>
<div class="a" style="left:600px;top:0;width:120px;height:40px;border-left:1px solid #ebeef5"></div>
<div class="a" style="left:11px;top:11px;font-size:15px;line-height:18px;color:#404040">6745</div>
<div class="a" style="left:131px;top:11px;font-size:13.5px;line-height:18px;color:#404040">CPJ_U1_1_P...</div>
<div class="a" style="left:371px;top:11px;font-size:14px;line-height:18px;color:#404040">模拟量</div>
<div class="a" style="left:491px;top:11px;font-size:14px;line-height:18px;color:#404040">冷凝器冲片机...</div>
</div>
<div class="a" style="left:0;top:200px;width:667px;height:40px;background:#fafafa;border-bottom:1px solid #ebeef5">
<div class="a" style="left:0px;top:0;width:120px;height:40px;border-left:1px solid #ebeef5"></div>
<div class="a" style="left:120px;top:0;width:120px;height:40px;border-left:1px solid #ebeef5"></div>
<div class="a" style="left:240px;top:0;width:120px;height:40px;border-left:1px solid #ebeef5"></div>
<div class="a" style="left:360px;top:0;width:120px;height:40px;border-left:1px solid #ebeef5"></div>
<div class="a" style="left:480px;top:0;width:120px;height:40px;border-left:1px solid #ebeef5"></div>
<div class="a" style="left:600px;top:0;width:120px;height:40px;border-left:1px solid #ebeef5"></div>
<div class="a" style="left:11px;top:11px;font-size:15px;line-height:18px;color:#404040">6780</div>
<div class="a" style="left:131px;top:11px;font-size:13.5px;line-height:18px;color:#404040">CPJ_U1_1_ST...</div>
<div class="a" style="left:371px;top:11px;font-size:14px;line-height:18px;color:#404040">数字量</div>
<div class="a" style="left:491px;top:11px;font-size:14px;line-height:18px;color:#404040">冷凝器冲片机...</div>
</div>
<div class="a" style="left:0;top:240px;width:667px;height:40px;background:#ffffff;border-bottom:1px solid #ebeef5">
<div class="a" style="left:0px;top:0;width:120px;height:40px;border-left:1px solid #ebeef5"></div>
<div class="a" style="left:120px;top:0;width:120px;height:40px;border-left:1px solid #ebeef5"></div>
<div class="a" style="left:240px;top:0;width:120px;height:40px;border-left:1px solid #ebeef5"></div>
<div class="a" style="left:360px;top:0;width:120px;height:40px;border-left:1px solid #ebeef5"></div>
<div class="a" style="left:480px;top:0;width:120px;height:40px;border-left:1px solid #ebeef5"></div>
<div class="a" style="left:600px;top:0;width:120px;height:40px;border-left:1px solid #ebeef5"></div>
<div class="a" style="left:11px;top:11px;font-size:15px;line-height:18px;color:#404040">6714</div>
<div class="a" style="left:131px;top:11px;font-size:13.5px;line-height:18px;color:#404040">CPJ_U1_1_ST...</div>
<div class="a" style="left:371px;top:11px;font-size:14px;line-height:18px;color:#404040">数字量</div>
<div class="a" style="left:491px;top:11px;font-size:14px;line-height:18px;color:#404040">冷凝器冲片机...</div>
</div>
<div class="a" style="left:0;top:280px;width:667px;height:40px;background:#fafafa;border-bottom:1px solid #ebeef5">
<div class="a" style="left:0px;top:0;width:120px;height:40px;border-left:1px solid #ebeef5"></div>
<div class="a" style="left:120px;top:0;width:120px;height:40px;border-left:1px solid #ebeef5"></div>
<div class="a" style="left:240px;top:0;width:120px;height:40px;border-left:1px solid #ebeef5"></div>
<div class="a" style="left:360px;top:0;width:120px;height:40px;border-left:1px solid #ebeef5"></div>
<div class="a" style="left:480px;top:0;width:120px;height:40px;border-left:1px solid #ebeef5"></div>
<div class="a" style="left:600px;top:0;width:120px;height:40px;border-left:1px solid #ebeef5"></div>
<div class="a" style="left:11px;top:11px;font-size:15px;line-height:18px;color:#404040">6705</div>
<div class="a" style="left:131px;top:11px;font-size:13.5px;line-height:18px;color:#404040">CPJ_U1_2_M...</div>
<div class="a" style="left:371px;top:11px;font-size:13.5px;line-height:18px;color:#404040">TEXT</div>
<div class="a" style="left:491px;top:11px;font-size:14px;line-height:18px;color:#404040">冷凝器冲片机...</div>
</div>
<div class="a" style="left:0;top:320px;width:667px;height:40px;background:#ffffff;border-bottom:1px solid #ebeef5">
<div class="a" style="left:0px;top:0;width:120px;height:40px;border-left:1px solid #ebeef5"></div>
<div class="a" style="left:120px;top:0;width:120px;height:40px;border-left:1px solid #ebeef5"></div>
<div class="a" style="left:240px;top:0;width:120px;height:40px;border-left:1px solid #ebeef5"></div>
<div class="a" style="left:360px;top:0;width:120px;height:40px;border-left:1px solid #ebeef5"></div>
<div class="a" style="left:480px;top:0;width:120px;height:40px;border-left:1px solid #ebeef5"></div>
<div class="a" style="left:600px;top:0;width:120px;height:40px;border-left:1px solid #ebeef5"></div>
<div class="a" style="left:11px;top:11px;font-size:15px;line-height:18px;color:#404040">6751</div>
<div class="a" style="left:131px;top:11px;font-size:13.5px;line-height:18px;color:#404040">CPJ_U1_2_P...</div>
<div class="a" style="left:371px;top:11px;font-size:14px;line-height:18px;color:#404040">模拟量</div>
<div class="a" style="left:491px;top:11px;font-size:14px;line-height:18px;color:#404040">冷凝器冲片机...</div>
</div>
<div class="a" style="left:0;top:360px;width:667px;height:40px;background:#fafafa;border-bottom:1px solid #ebeef5">
<div class="a" style="left:0px;top:0;width:120px;height:40px;border-left:1px solid #ebeef5"></div>
<div class="a" style="left:120px;top:0;width:120px;height:40px;border-left:1px solid #ebeef5"></div>
<div class="a" style="left:240px;top:0;width:120px;height:40px;border-left:1px solid #ebeef5"></div>
<div class="a" style="left:360px;top:0;width:120px;height:40px;border-left:1px solid #ebeef5"></div>
<div class="a" style="left:480px;top:0;width:120px;height:40px;border-left:1px solid #ebeef5"></div>
<div class="a" style="left:600px;top:0;width:120px;height:40px;border-left:1px solid #ebeef5"></div>
<div class="a" style="left:11px;top:11px;font-size:15px;line-height:18px;color:#404040">6762</div>
<div class="a" style="left:131px;top:11px;font-size:13.5px;line-height:18px;color:#404040">CPJ_U1_2_P...</div>
<div class="a" style="left:371px;top:11px;font-size:14px;line-height:18px;color:#404040">模拟量</div>
<div class="a" style="left:491px;top:11px;font-size:14px;line-height:18px;color:#404040">冷凝器冲片机...</div>
</div>
</div>
<div class="a" style="left:672px;top:46px;width:4px;height:370px;background:#efefef;border-radius:2px"></div>
<div class="a" style="left:672px;top:46px;width:4px;height:32px;background:#c6c6c6;border-radius:2px"></div>
<div class="a" style="left:5px;top:427px;width:657px;height:5px;background:#efefef;border-radius:3px"></div>
<div class="a" style="left:5px;top:427px;width:91px;height:5px;background:#c6c6c6;border-radius:3px"></div>
</div>
<div class="a" style="left:0;top:536px;width:935px;height:1px;background:#ebeef5"></div>
<div class="a" style="left:847px;top:547px;width:68px;height:35px;background:#1c55c4;border-radius:4px;color:#fff;text-align:center;line-height:35px;font-size:13px">下一步</div>
</div>
</body></html>
